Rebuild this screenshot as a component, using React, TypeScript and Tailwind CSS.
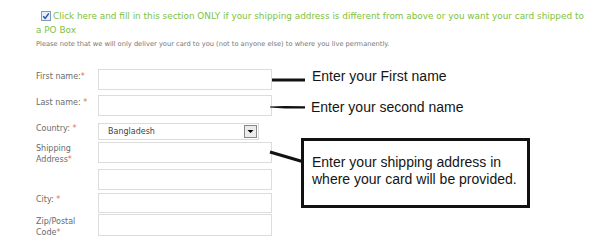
import React from "react";

const labelCls = "w-[62px] shrink-0 text-[8px] leading-[11px] text-[#6b6b6b]";
const inputCls = "w-[174px] h-[21px] border border-[#dcdcdc] bg-white";

const Star = () => <span className="text-[#e0704c]">*</span>;

const Row = ({ label, mt, h = "h-[21px]", labelPt = "pt-[2px]" }: { label: React.ReactNode; mt: string; h?: string; labelPt?: string }) => (
  <div className={`flex ${mt}`}>
    <div className={`${labelCls} ${labelPt}`}>{label}</div>
    <div className={`w-[174px] ${h} border border-[#dcdcdc] bg-white`} />
  </div>
);

export default function App() {
  return (
    <div className="relative h-[244px] w-[600px] overflow-hidden bg-white font-['DejaVu_Sans',sans-serif]">
      {/* header text */}
      <div className="pl-[36px] pt-[9px]">
        <p className="text-[8.9px] leading-[14px] text-[#80c240]">
          <span className="ml-[5px] mr-[2px] inline-flex h-[10px] w-[10px] translate-y-[1px] items-center justify-center border border-[#7f9db9] bg-[#e6eefc] align-baseline">
            <svg width="8" height="8" viewBox="0 0 8 8">
              <path d="M1.2 4.2 L3.2 6.3 L6.8 1.4" fill="none" stroke="#2a4f9a" strokeWidth="1.4" />
            </svg>
          </span>
          Click here and fill in this section ONLY if your shipping address is different from above or you want your card shipped to
          <br />a PO Box
        </p>
        <p className="mt-[1px] text-[6.7px] leading-[12px] text-[#777]">
          Please note that we will only deliver your card to you (not to anyone else) to where you live permanently.
        </p>
      </div>

      {/* form */}
      <div className="flex flex-col pl-[36px] pt-[19px]">
        <Row mt="mt-0" label={<>First name:<Star /></>} />
        <Row mt="mt-[5px]" label={<>Last name: <Star /></>} />
        <div className="mt-[7px] flex">
          <div className={`${labelCls} pt-[0px]`}>Country: <Star /></div>
          <div className="flex h-[17px] w-[161px] items-center justify-between border border-[#dcdcdc] bg-white pl-[9px] pr-[1px]">
            <span className="text-[8px] text-[#444]">Bangladesh</span>
            <span className="flex h-[13px] w-[13px] items-center justify-center border border-[#888] bg-[#ececec]">
              <svg width="7" height="5" viewBox="0 0 7 5">
                <path d="M0.5 1 L6.5 1 L3.5 4 Z" fill="#000" />
              </svg>
            </span>
          </div>
        </div>
        <Row mt="mt-[2px]" labelPt="pt-[1px]" label={<>Shipping<br />Address<Star /></>} />
        <div className={`mt-[4px] ml-[62px] ${inputCls}`} />
        <Row mt="mt-[3px]" h="h-[20px]" labelPt="pt-[1px]" label={<>City: <Star /></>} />
        <Row mt="mt-[1px]" h="h-[22px]" labelPt="pt-[2px]" label={<>Zip/Postal<br />Code<Star /></>} />
      </div>

      {/* annotation overlay */}
      <svg className="absolute left-0 top-0" width="600" height="244" viewBox="0 0 600 244">
        <line x1="272" y1="80" x2="305" y2="80" stroke="#111" strokeWidth="3" />
        <path d="M270 106.5 L285 106 L305 106.2 L305 108.4 L285 108.4 L270 107.5 Z" fill="#111" />
        <line x1="270" y1="152" x2="304" y2="162" stroke="#111" strokeWidth="3" />
      </svg>
      <div className="absolute left-[312px] top-[68px] font-['Liberation_Sans',Arial,sans-serif] text-[14px] leading-[16px] text-[#151515]">
        Enter your First name
      </div>
      <div className="absolute left-[311px] top-[99px] font-['Liberation_Sans',Arial,sans-serif] text-[14px] leading-[16px] text-[#151515]">
        Enter your second name
      </div>
      <div className="absolute left-[301px] top-[138px] h-[70px] w-[229px] border-[3px] border-[#111] bg-white pl-[8px] pt-[13px] font-['Liberation_Sans',Arial,sans-serif] text-[14px] leading-[17px] text-[#151515]">
        Enter your shipping address in
        <br />
        where your card will be provided.
      </div>
    </div>
  );
}
